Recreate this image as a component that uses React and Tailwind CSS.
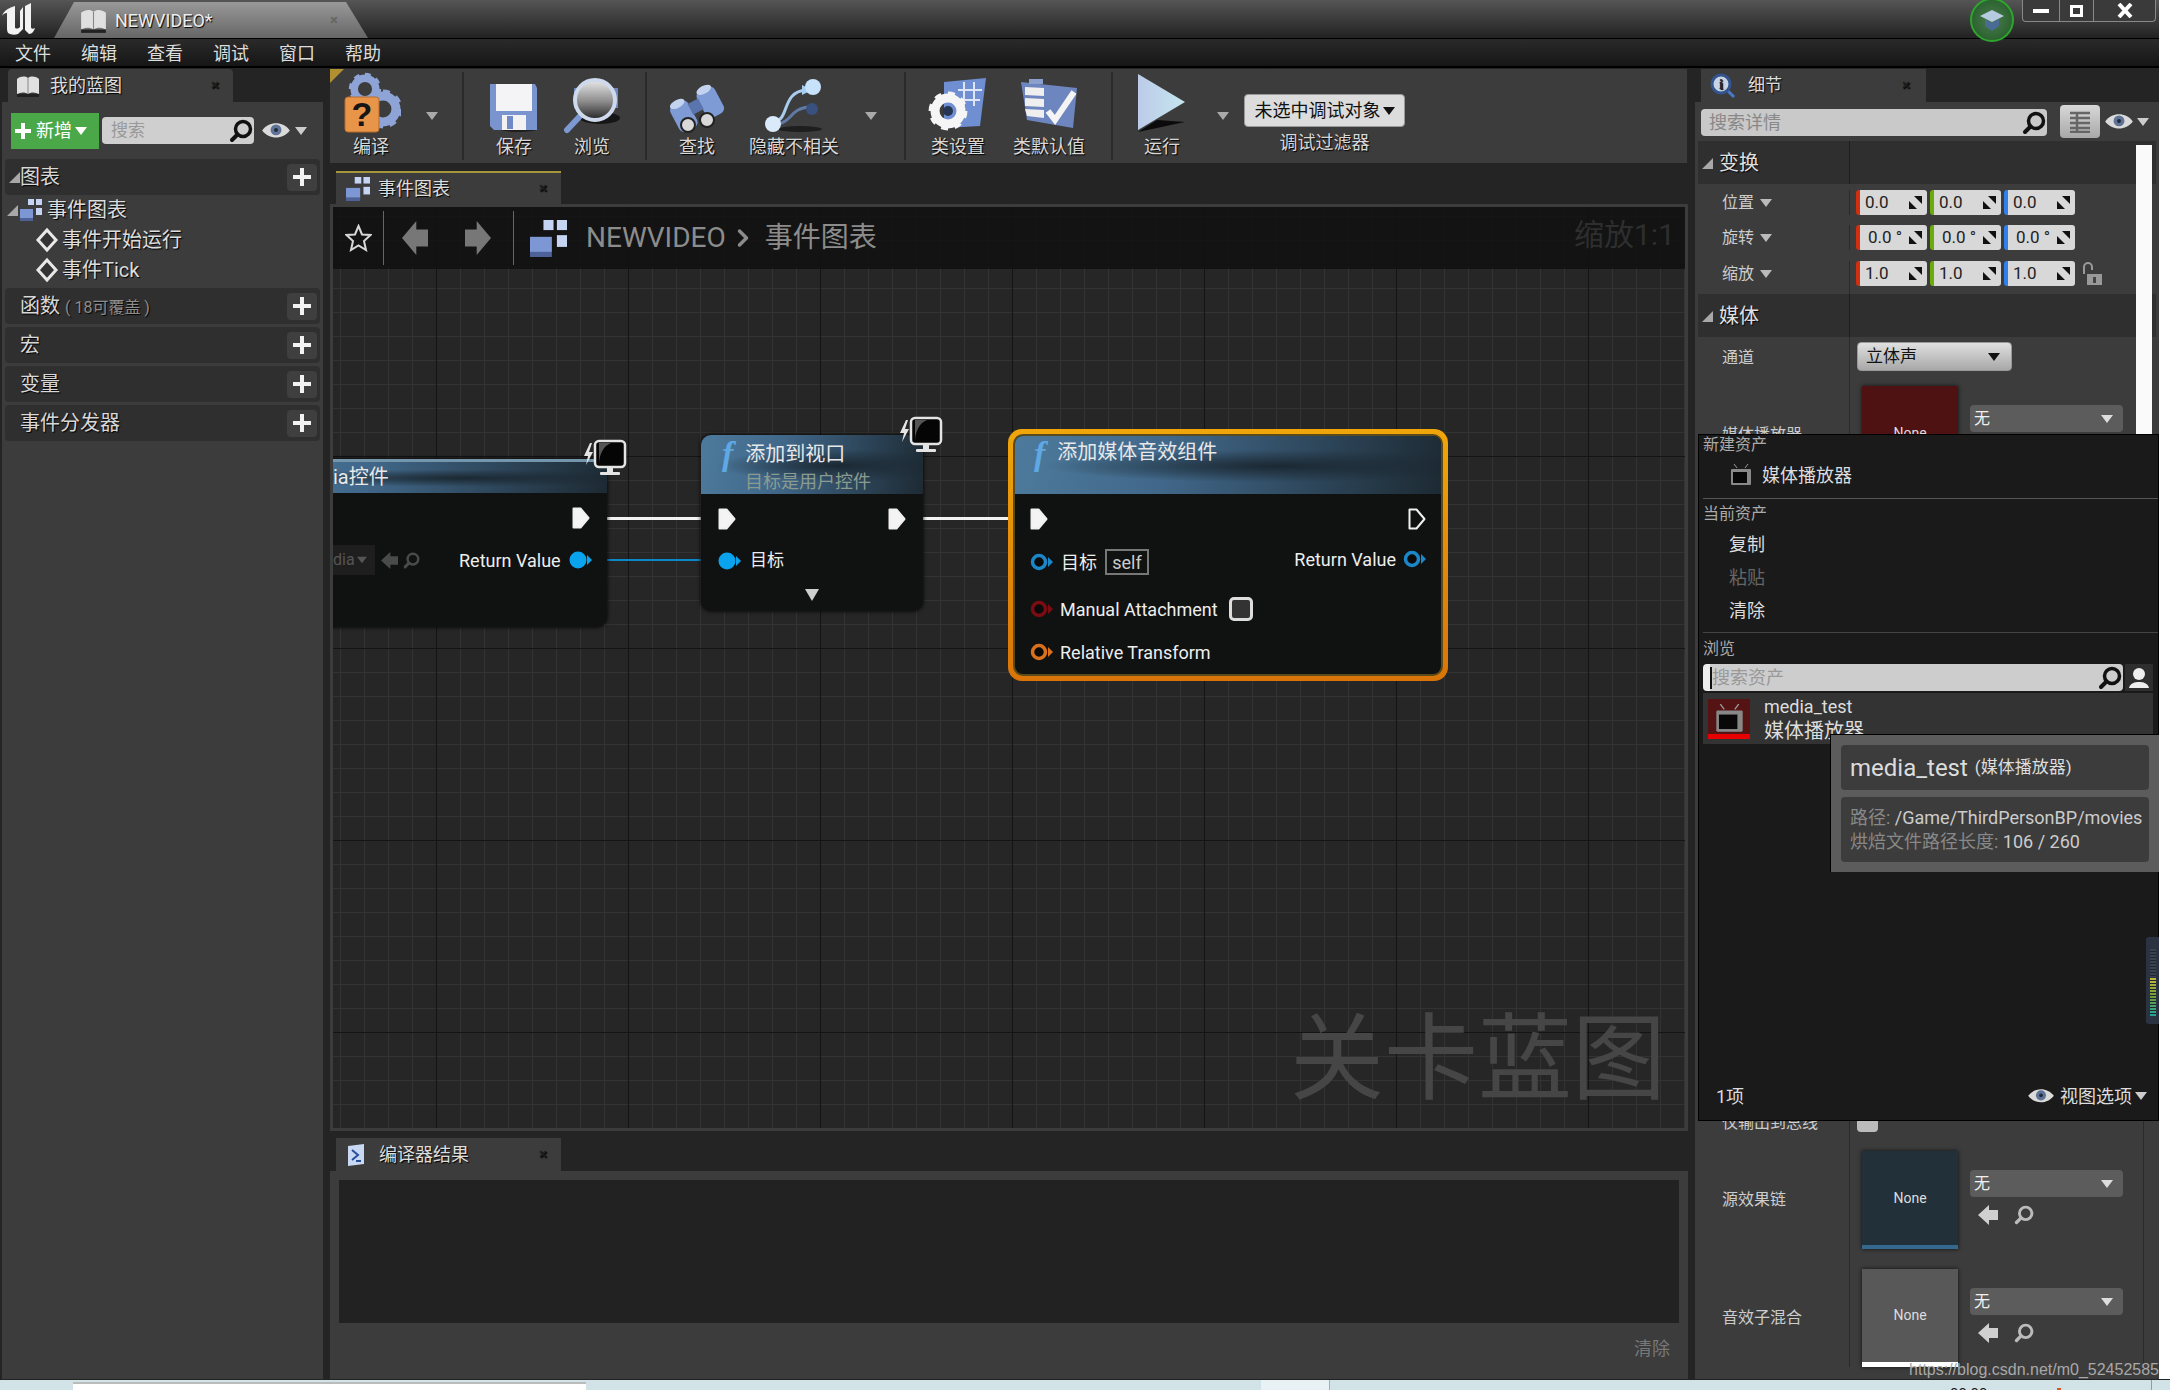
import { ChevronRight } from 'lucide-react';

const shadow = '[text-shadow:1px_1px_1px_#000]';

const Caret = ({ className = '' }) => (
  <svg width="12" height="8" viewBox="0 0 12 8" className={`shrink-0 ${className}`}>
    <polygon points="0,0 12,0 6,8" fill="currentColor" />
  </svg>
);

const Gear = ({ cx, cy, r, fill }) => (
  <g>
    <circle cx={cx} cy={cy} r={r * 0.72} fill="none" stroke={fill} strokeWidth={r * 0.5} />
    <circle cx={cx} cy={cy} r={r * 0.92} fill="none" stroke={fill} strokeWidth={r * 0.32} pathLength="16" strokeDasharray="1 1" />
  </g>
);

const CompileIcon = () => (
  <svg width="60" height="62" viewBox="0 0 60 62">
    <Gear cx="24" cy="17" r="15" fill="#8ea3d6" />
    <Gear cx="42" cy="37" r="18" fill="#8ea3d6" />
    <rect x="4" y="25" width="34" height="35" rx="3" fill="#e8954a" stroke="#b96d28" />
    <text x="21" y="54" textAnchor="middle" fontSize="34" fontWeight="700" fontFamily="Liberation Sans" fill="#161616">?</text>
  </svg>
);

const SaveIcon = () => (
  <svg width="50" height="52" viewBox="0 0 50 52">
    <ellipse cx="30" cy="47" rx="18" ry="3" fill="#111" opacity="0.7" />
    <path d="M1 2h45l2 4v42H5l-4-4z" fill="#7a94cf" />
    <rect x="7" y="2" width="36" height="27" fill="#f4f4f6" />
    <rect x="13" y="33" width="24" height="15" fill="#f2f2f2" />
    <rect x="18" y="34" width="6" height="13" fill="#6f8ac6" />
  </svg>
);

const BrowseIcon = () => (
  <svg width="60" height="58" viewBox="0 0 60 58">
    <defs>
      <linearGradient id="glass" x1="0" y1="0" x2="0" y2="1">
        <stop offset="0" stopColor="#e9e9e9" />
        <stop offset="0.55" stopColor="#8a8a8a" />
        <stop offset="1" stopColor="#222" />
      </linearGradient>
    </defs>
    <ellipse cx="38" cy="42" rx="20" ry="6" fill="#0d0d0d" opacity="0.8" />
    <rect x="12" y="12" width="44" height="20" fill="#6f87bd" />
    <line x1="20" y1="38" x2="5" y2="54" stroke="#7d99d2" strokeWidth="6" strokeLinecap="round" />
    <circle cx="33" cy="24" r="20" fill="url(#glass)" stroke="#cfd9ec" strokeWidth="4" />
  </svg>
);

const FindIcon = () => (
  <svg width="58" height="54" viewBox="0 0 58 54">
    <g transform="rotate(-28 29 27)">
      <rect x="3" y="14" width="20" height="30" rx="6" fill="#7e9bd6" />
      <rect x="33" y="14" width="20" height="30" rx="6" fill="#7e9bd6" />
      <rect x="22" y="20" width="12" height="12" fill="#5a74ad" />
      <ellipse cx="13" cy="15" rx="8" ry="4" fill="#c3d2ef" />
      <ellipse cx="43" cy="15" rx="8" ry="4" fill="#c3d2ef" />
    </g>
    <circle cx="20" cy="45" r="7" fill="#d8d8d8" stroke="#222" strokeWidth="2" />
    <circle cx="39" cy="40" r="7" fill="#d8d8d8" stroke="#222" strokeWidth="2" />
  </svg>
);

const HideIcon = () => (
  <svg width="60" height="56" viewBox="0 0 60 56">
    <ellipse cx="36" cy="51" rx="22" ry="3" fill="#111" opacity="0.7" />
    <path d="M10 44C26 42 17 14 42 12" fill="none" stroke="#a9cdf0" strokeWidth="3" />
    <polygon points="38,7 48,12 38,17" fill="#a9cdf0" />
    <path d="M14 46C28 44 26 30 46 29" fill="none" stroke="#6079a5" strokeWidth="3" />
    <circle cx="49" cy="9" r="8" fill="#c7e2fb" />
    <circle cx="48" cy="31" r="6" fill="#39517f" />
    <circle cx="9" cy="46" r="8" fill="#dbeafb" />
  </svg>
);

const SettingsIcon = () => (
  <svg width="60" height="56" viewBox="0 0 60 56">
    <polygon points="16,4 58,0 52,48 16,50" fill="#6f8fd2" />
    <path d="M30 12h24M28 22h24M36 4v24M46 4v24" stroke="#dde6f7" strokeWidth="2" />
    <Gear cx="20" cy="33" r="18" fill="#f5f5f5" />
    <circle cx="20" cy="33" r="5" fill="#263553" />
  </svg>
);

const DefaultsIcon = () => (
  <svg width="60" height="56" viewBox="0 0 60 56">
    <polygon points="2,4 58,10 54,50 8,42" fill="#6e86bf" />
    <rect x="10" y="1" width="14" height="5" fill="#8ba0cd" />
    <polygon points="6,9 25,10 25,18 6,17" fill="#efefef" />
    <polygon points="6,20 25,21 25,29 6,28" fill="#efefef" />
    <polygon points="6,31 25,32 25,40 8,38" fill="#efefef" />
    <path d="M29 33l7 9L55 14" fill="none" stroke="#f4f4f4" strokeWidth="6" />
  </svg>
);

const PlayIcon = () => (
  <svg width="50" height="60" viewBox="0 0 50 60">
    <defs>
      <linearGradient id="play" x1="0" y1="0" x2="1" y2="0">
        <stop offset="0" stopColor="#bccbe8" />
        <stop offset="1" stopColor="#c5e6ef" />
      </linearGradient>
    </defs>
    <polygon points="1,58 48,48 20,46" fill="#0b0b0b" />
    <polygon points="1,0 48,28 1,56" fill="url(#play)" />
  </svg>
);

const Search = ({ className = '', color = '#111', size = 24 }) => (
  <svg width={size} height={size} viewBox="0 0 24 24" className={`shrink-0 ${className}`}>
    <circle cx="14" cy="10" r="7.5" fill="none" stroke={color} strokeWidth="3.5" />
    <line x1="8.5" y1="15.5" x2="3" y2="21" stroke={color} strokeWidth="4" strokeLinecap="round" />
  </svg>
);

const Eye = ({ w = 28 }) => (
  <svg width={w} height={w * 0.6} viewBox="0 0 28 17" className="shrink-0">
    <path d="M0 8.5C7 -1 21 -1 28 8.5C21 18 7 18 0 8.5z" fill="#dadada" />
    <circle cx="14" cy="8" r="5.5" fill="#5e7396" />
    <circle cx="14" cy="8" r="2" fill="#202a3a" />
  </svg>
);

const BackArrow = ({ color = '#ccc', w = 20, h = 20 }) => (
  <svg width={w} height={h} viewBox="0 0 20 20" preserveAspectRatio="none" className="shrink-0">
    <polygon points="0,10 11,0 11,5 20,5 20,15 11,15 11,20" fill={color} />
  </svg>
);

const GraphGlyph = ({ size = 22 }) => (
  <svg width={size} height={size} viewBox="0 0 22 22" className="shrink-0">
    <rect x="8" y="0" width="6" height="6" fill="#c4d4f2" />
    <rect x="16" y="0" width="6" height="6" fill="#c4d4f2" />
    <rect x="16" y="9" width="6" height="7" fill="#c4d4f2" />
    <rect x="0" y="10" width="13" height="9" fill="#7c97d3" />
    <rect x="0" y="19" width="13" height="3" fill="#4c6299" />
  </svg>
);

const BookIcon = ({ w = 24, h = 24 }) => (
  <svg width={w} height={h} viewBox="0 0 24 24" className="shrink-0">
    <path d="M1 5c4-3 8-3 11-1c3-2 7-2 11 1v15c-4-2-8-2-11 0c-3-2-7-2-11 0z" fill="#e0e0e0" />
    <path d="M12 4v16" stroke="#888" />
    <rect x="1" y="20" width="22" height="3" fill="#222" />
  </svg>
);

const Close = () => <span className="text-[15px] leading-none font-bold text-[#1e1e1e]">×</span>;

const PlusBtn = () => (
  <div className="flex h-[27px] w-[30px] items-center justify-center rounded-sm bg-[#3f3f3f]">
    <svg width="18" height="18" viewBox="0 0 18 18">
      <path d="M7 0h4v7h7v4h-7v7H7v-7H0V7h7z" fill="#f2f2f2" />
    </svg>
  </div>
);

const Corner = () => (
  <svg width="11" height="11" viewBox="0 0 11 11" className="shrink-0">
    <polygon points="11,0 11,11 0,11" fill="#a8a8a8" />
  </svg>
);

const Section = ({ children, arrow, className = 'mb-[3px]' }) => (
  <div className={`mx-[3px] flex h-[36px] items-center rounded-sm bg-[#2f2f2f] pr-[3px] ${className}`}>
    <div className="flex w-[15px] justify-end">{arrow && <Corner />}</div>
    <div className={`flex-1 text-[20px] text-[#d8d8d8] ${shadow}`}>{children}</div>
    <PlusBtn />
  </div>
);

const Diamond = () => (
  <svg width="24" height="26" viewBox="0 0 24 26" className="shrink-0">
    <polygon points="12,3 21,13 12,23 3,13" fill="#333" stroke="#e8e8e8" strokeWidth="3" />
  </svg>
);

const LeftPanel = () => (
  <div className="flex w-[330px] flex-col">
    <div className={`ml-[8px] flex h-[33px] w-[225px] items-center rounded-t-sm bg-[#3c3c3c] pr-[14px] pl-[8px] text-[18px] text-[#ddd] ${shadow}`}>
      <BookIcon />
      <span className="ml-[10px] flex-1">我的蓝图</span>
      <Close />
    </div>
    <div className="ml-[2px] w-[321px] flex-1 bg-[#3c3c3c]">
      <div className="flex h-[57px] items-center pl-[9px]">
        <div className="flex h-[36px] w-[88px] items-center bg-[#4aa848] pl-[4px] text-[18px] text-white">
          <svg width="16" height="16" viewBox="0 0 16 16"><path d="M6 0h4v6h6v4h-6v6H6v-6H0V6h6z" fill="#fff" /></svg>
          <span className="ml-[5px]">新增</span>
          <Caret className="ml-[3px] text-white" />
        </div>
        <div className="ml-[3px] flex h-[27px] w-[152px] items-center rounded-sm bg-[#cfcfcf] pr-[1px] pl-[9px] text-[17px] text-[#999]">
          <span className="flex-1">搜索</span>
          <Search />
        </div>
        <div className="ml-[8px]"><Eye /></div>
        <Caret className="ml-[5px] text-[#ccc]" />
      </div>
      <Section arrow className="mb-0">图表</Section>
      <div className="flex h-[30px] items-center pl-[5px] text-[20px] text-[#ddd]">
        <Corner />
        <span className="ml-[2px]"><GraphGlyph /></span>
        <span className={`ml-[5px] ${shadow}`}>事件图表</span>
      </div>
      <div className={`flex h-[30px] items-center pl-[33px] text-[20px] text-[#ddd] ${shadow}`}>
        <Diamond />
        <span className="ml-[3px]">事件开始运行</span>
      </div>
      <div className={`mb-[3px] flex h-[30px] items-center pl-[33px] text-[20px] text-[#ddd] ${shadow}`}>
        <Diamond />
        <span className="ml-[3px]">事件Tick</span>
      </div>
      <Section>
        函数 <span className="text-[16px] text-[#8c8c8c]">( 18可覆盖 )</span>
      </Section>
      <Section>宏</Section>
      <Section>变量</Section>
      <Section>事件分发器</Section>
    </div>
  </div>
);

const ToolBtn = ({ width, label, children }) => (
  <div className="flex flex-col items-center" style={{ width }}>
    <div className="flex h-[65px] items-end">{children}</div>
    <div className={`mt-[1px] text-[18px] leading-[24px] text-[#d8d8d8] ${shadow}`}>{label}</div>
  </div>
);

const ToolCaret = ({ width }) => (
  <div className="flex justify-center pt-[43px]" style={{ width }}>
    <Caret className="text-[#aaa]" />
  </div>
);

const ToolSep = ({ className = '' }) => <div className={`my-[3px] w-[2px] bg-[#2a2a2a] ${className}`} />;

const Toolbar = () => (
  <div className="relative flex h-[94px] w-[1357px] bg-[#3c3c3c]">
    <div className="absolute top-0 left-0 h-0 w-0 border-t-[14px] border-r-[14px] border-t-[#b09030] border-r-transparent" />
    <ToolBtn width={82} label="编译"><CompileIcon /></ToolBtn>
    <ToolCaret width={40} />
    <ToolSep className="ml-[10px]" />
    <div className="w-[12px]" />
    <ToolBtn width={76} label="保存"><SaveIcon /></ToolBtn>
    <ToolBtn width={80} label="浏览"><BrowseIcon /></ToolBtn>
    <ToolSep className="ml-[13px]" />
    <div className="w-[5px]" />
    <ToolBtn width={90} label="查找"><FindIcon /></ToolBtn>
    <ToolBtn width={104} label="隐藏不相关"><HideIcon /></ToolBtn>
    <ToolCaret width={50} />
    <ToolSep className="ml-[8px]" />
    <div className="w-[7px]" />
    <ToolBtn width={90} label="类设置"><SettingsIcon /></ToolBtn>
    <ToolBtn width={92} label="类默认值"><DefaultsIcon /></ToolBtn>
    <ToolSep className="ml-[16px]" />
    <div className="w-[9px]" />
    <ToolBtn width={80} label="运行"><PlayIcon /></ToolBtn>
    <ToolCaret width={42} />
    <div className="flex w-[161px] flex-col items-center pt-[25px]">
      <div className="flex h-[33px] w-[161px] items-center justify-center rounded-sm border border-[#999] bg-[#dcdcdc] text-[18px] text-[#111]">
        未选中调试对象
        <Caret className="ml-[2px] text-[#111]" />
      </div>
      <div className={`mt-[2px] text-[18px] text-[#d8d8d8] ${shadow}`}>调试过滤器</div>
    </div>
  </div>
);

const Monitor = ({ className }) => (
  <svg width="44" height="38" viewBox="0 0 44 38" className={`absolute ${className}`}>
    <path d="M7 4L1 17h4l-2 9 7-13H6l3-9z" fill="#e4e4e4" />
    <rect x="12" y="2" width="30" height="26" rx="4" fill="#050505" stroke="#e4e4e4" strokeWidth="2.5" />
    <path d="M16 26c0-10 4-19 12-22H16z" fill="#555" />
    <rect x="24" y="28" width="6" height="5" fill="#e4e4e4" />
    <rect x="17" y="33" width="20" height="3" rx="1" fill="#e4e4e4" />
  </svg>
);

const ExecPin = ({ hollow }) => (
  <svg width="18" height="22" viewBox="0 0 18 22" className="shrink-0">
    <path d="M1.5 1.5h7L16.5 11l-8 9.500h-7z" fill={hollow ? 'none' : '#f4f4f4'} stroke="#f0f0f0" strokeWidth="2" strokeLinejoin="round" />
  </svg>
);

const DataPin = ({ color, filled }) => (
  <svg width="23" height="18" viewBox="0 0 23 18" className="shrink-0">
    <polygon points="18,4 23,9 18,14" fill={color} />
    <circle cx="9" cy="9" r={filled ? 8.500 : 6.500} fill={filled ? color : '#0a0a0a'} stroke={color} strokeWidth={filled ? 0 : 3.500} />
  </svg>
);

const FGlyph = () => (
  <span className="[font-family:'Liberation_Serif',serif] text-[34px] leading-none font-bold text-[#5fa8e4] italic">f</span>
);

const headerBg = 'bg-[radial-gradient(ellipse_55%_28%_at_62%_52%,#1b2832,transparent),linear-gradient(100deg,#4d7a9c_0%,#41688a_35%,#1d2a33_100%)]';
const pinText = 'text-[18px] text-[#eee]';

const Node3 = () => (
  <div className="absolute top-[222px] left-[675px] h-[252px] w-[440px] rounded-[14px] bg-[linear-gradient(180deg,#efa60a,#e0860a_60%,#d97508)] p-[5px]">
    <div className="h-full rounded-[10px] border-2 border-[#5a4a1c] bg-[#101211]">
      <div className={`flex h-[58px] items-start rounded-t-[8px] pt-[1px] pl-[19px] ${headerBg}`}>
        <FGlyph />
        <span className="ml-[12px] text-[20px] text-[#e8e8e8]">添加媒体音效组件</span>
      </div>
      <div className="flex flex-col pr-[15px] pl-[15px]">
        <div className="mt-[8px] flex h-[34px] items-center justify-between">
          <ExecPin />
          <ExecPin hollow />
        </div>
        <div className={`mt-[9px] flex h-[34px] items-center ${pinText}`}>
          <DataPin color="#1b86c8" />
          <span className="ml-[8px]">目标</span>
          <span className="ml-[8px] flex h-[26px] w-[44px] items-center justify-center border-2 border-[#777] text-[#ccc]">self</span>
          <span className="ml-auto -translate-y-[3px]">Return Value</span>
          <span className="ml-[7px] -translate-y-[3px]"><DataPin color="#1b86c8" /></span>
        </div>
        <div className={`mt-[13px] flex h-[34px] items-center ${pinText}`}>
          <DataPin color="#7a0c12" />
          <span className="ml-[7px]">Manual Attachment</span>
          <span className="ml-[11px] h-[24px] w-[24px] rounded-[5px] border-[3px] border-[#ddd] bg-[#333]" />
        </div>
        <div className={`mt-[9px] flex h-[34px] items-center ${pinText}`}>
          <DataPin color="#d9711c" />
          <span className="ml-[7px]">Relative Transform</span>
        </div>
      </div>
    </div>
  </div>
);

const Node2 = () => (
  <div className="absolute top-[228px] left-[368px] h-[176px] w-[222px] rounded-[10px] bg-[#101211] shadow-[0_0_4px_#000]">
    <div className={`h-[59px] rounded-t-[10px] pt-[2px] pl-[21px] ${headerBg}`}>
      <div className="flex items-center">
        <FGlyph />
        <span className="ml-[12px] text-[20px] leading-[26px] text-[#e8e8e8]">添加到视口</span>
      </div>
      <div className="ml-[23px] text-[18px] leading-[22px] text-[#8b9c8f]">目标是用户控件</div>
    </div>
    <div className="mt-[5px] flex h-[40px] items-center justify-between pr-[17px] pl-[17px]">
      <ExecPin />
      <ExecPin />
    </div>
    <div className="mt-[2px] flex h-[40px] items-center pl-[17px]">
      <DataPin color="#0aa4ee" filled />
      <span className="ml-[9px] text-[17px] text-[#eee]">目标</span>
    </div>
    <div className="mt-[8px] flex justify-center">
      <svg width="14" height="12" viewBox="0 0 14 12"><polygon points="0,0 14,0 7,12" fill="#cfcfcf" /></svg>
    </div>
    <Monitor className="-top-[19px] right-[-20px]" />
  </div>
);

const Node1 = () => (
  <div className="absolute top-[252px] left-[-100px] h-[168px] w-[374px] rounded-[10px] bg-[#101211] shadow-[0_0_4px_#000]">
    <div className={`flex h-[34px] items-center rounded-t-[10px] border-t-[3px] border-[#7396ad] pb-[2px] pl-[100px] text-[20px] text-[#e8e8e8] ${headerBg}`}>
      ia控件
    </div>
    <div className="mt-[8px] flex h-[34px] items-center justify-end pr-[17px]">
      <ExecPin />
    </div>
    <div className="mt-[8px] flex h-[34px] items-center pl-[100px]">
      <span className="flex h-[30px] w-[42px] items-center bg-[#1e1e1e] text-[16px] text-[#555]">
        dia
        <Caret className="ml-[2px] !w-[10px] text-[#555]" />
      </span>
      <span className="ml-[6px]"><BackArrow color="#4a4a4a" w={17} h={17} /></span>
      <span className="ml-[5px]"><Search color="#4a4a4a" size={17} /></span>
      <span className="ml-[39px] text-[18px] whitespace-nowrap text-[#eee]">Return Value</span>
      <span className="ml-[8px]"><DataPin color="#0aa4ee" filled /></span>
    </div>
    <Monitor className="-top-[20px] right-[-20px]" />
  </div>
);

const Graph = () => (
  <div className="border-[3px] border-[#3c3c3c]">
    <div className="relative h-[921px] overflow-hidden bg-[#262626] bg-[linear-gradient(#141414_1px,transparent_1px),linear-gradient(90deg,#141414_1px,transparent_1px),linear-gradient(#333_1px,transparent_1px),linear-gradient(90deg,#333_1px,transparent_1px)] bg-[size:192px_192px,192px_192px,24px_24px,24px_24px] bg-[position:0_57px,103px_0,0_9px,7px_0]">
      <div className="absolute top-[310px] left-[274px] h-[3px] w-[110px] bg-[#f2f2f2]" />
      <div className="absolute top-[310px] left-[570px] h-[3px] w-[110px] bg-[#f2f2f2]" />
      <div className="absolute top-[352px] left-[274px] h-[2px] w-[110px] bg-[#0a88c8]" />
      <Node1 />
      <Node2 />
      <Node3 />

      <div className="absolute top-0 right-0 left-0 flex h-[62px] items-center bg-[#111]/85 pl-[12px]">
        <svg width="27" height="28" viewBox="0 0 27 28" className="shrink-0">
          <polygon points="13.5,2 17,10.500 25.500,11 19,17 21,26 13.500,21.500 6,26 8,17 1.500,11 10,10.500" fill="none" stroke="#d8d8d8" strokeWidth="2" />
        </svg>
        <div className="ml-[11px] h-[54px] w-[1px] bg-[#666]" />
        <span className="ml-[18px]"><BackArrow color="#777" w={26} h={34} /></span>
        <span className="ml-[37px] -scale-x-100"><BackArrow color="#777" w={26} h={34} /></span>
        <div className="ml-[22px] h-[54px] w-[1px] bg-[#666]" />
        <span className="ml-[16px]"><GraphGlyph size={37} /></span>
        <span className="ml-[19px] text-[28px] text-[#8c8c8c]">NEWVIDEO</span>
        <ChevronRight size={28} strokeWidth={3} className="ml-[3px] text-[#8c8c8c]" />
        <span className="ml-[8px] text-[28px] text-[#8c8c8c]">事件图表</span>
        <span className="mr-[10px] ml-auto pb-[8px] text-[30px] text-[#2e2e2e]">缩放1:1</span>
      </div>
      <div className="absolute top-[795px] left-[957px] text-[94px] leading-[116px] font-normal whitespace-nowrap text-[#464646]">关卡蓝图</div>
    </div>
  </div>
);

const Tab = ({ icon, label, yellow, gap }) => (
  <div className={`ml-[6px] flex h-[33px] w-[225px] items-center bg-[#3c3c3c] pr-[14px] pl-[10px] text-[18px] text-[#ddd] ${shadow} ${yellow ? 'border-t-2 border-[#a8963c]' : ''}`}>
    {icon}
    <span className={`flex-1 ${gap}`}>{label}</span>
    <Close />
  </div>
);

const CenterPanel = () => (
  <div className="flex w-[1358px] flex-col">
    <Toolbar />
    <div className="mt-[8px]">
      <Tab yellow gap="ml-[8px]" icon={<GraphGlyph size={24} />} label="事件图表" />
    </div>
    <Graph />
    <div className="mt-[7px]">
      <Tab
        gap="ml-[13px]"
        label="编译器结果"
        icon={
          <svg width="20" height="22" viewBox="0 0 20 22" className="shrink-0">
            <polygon points="2,2 18,0 18,20 2,22" fill="#c9d9f3" />
            <path d="M6 6l6 5-6 5M10 17h5" fill="none" stroke="#274d9b" strokeWidth="2" />
          </svg>
        }
      />
    </div>
    <div className="flex-1 bg-[#3c3c3c] px-[9px] pt-[9px]">
      <div className="h-[143px] bg-[#222]" />
      <div className="mt-[12px] pr-[9px] text-right text-[18px] text-[#777]">清除</div>
    </div>
  </div>
);

const NumBox = ({ value, color, deg }) => (
  <div className={`flex h-[25px] w-[71px] items-center rounded-[3px] border-l-4 bg-[#d8d8d8] pr-[5px] text-[17px] text-[#222] ${color} ${deg ? 'pl-[8px]' : 'pl-[5px]'}`}>
    <span className="flex-1 whitespace-nowrap">{value}</span>
    <svg width="13" height="13" viewBox="0 0 13 13" className="shrink-0">
      <polygon points="5,0 13,0 13,8" fill="#111" />
      <polygon points="0,5 0,13 8,13" fill="#111" />
    </svg>
  </div>
);

const TransformRow = ({ label, value, deg, lock, className = '' }) => (
  <div className={`flex h-[25px] ${className}`}>
    <div className="flex w-[155px] items-center border-r border-[#2a2a2a] pl-[27px] text-[16px] text-[#ccc]">
      {label}
      <Caret className="ml-[6px] text-[#bbb]" />
    </div>
    <div className="flex items-center gap-[3px] pl-[6px]">
      <NumBox value={value} color="border-[#d0300f]" deg={deg} />
      <NumBox value={value} color="border-[#6cab0c]" deg={deg} />
      <NumBox value={value} color="border-[#2f80ea]" deg={deg} />
      {lock && (
        <svg width="22" height="24" viewBox="0 0 22 24" className="ml-[3px] shrink-0">
          <path d="M3 12V5a4 4 0 0 1 8 0v3" fill="none" stroke="#999" strokeWidth="2" />
          <rect x="6" y="12" width="15" height="11" fill="#999" />
          <rect x="12" y="15" width="3" height="6" fill="#444" />
        </svg>
      )}
    </div>
  </div>
);

const DetailSection = ({ label }) => (
  <div className="mx-[3px] flex h-[43px] items-center bg-[#2f2f2f]">
    <div className={`flex w-[152px] items-center self-stretch border-r border-[#1e1e1e] pt-[1px] pl-[4px] text-[20px] text-[#e0e0e0] ${shadow}`}>
      <Corner />
      <span className="ml-[6px]">{label}</span>
    </div>
  </div>
);

const AssetRow = ({ label, thumb, strip, text = 'None', className = '', stripH }) => (
  <div className={`flex h-[98px] ${className}`}>
    <div className="flex w-[155px] items-center border-r border-[#2a2a2a] pl-[27px] text-[16px] text-[#ccc]">{label}</div>
    <div className={`ml-[12px] flex h-[98px] w-[96px] flex-col shadow-[0_0_4px_#111] ${thumb}`}>
      <div className="flex flex-1 items-center justify-center text-[14px] text-[#ddd]">{text}</div>
      <div className={`${stripH} ${strip}`} />
    </div>
    <div className="ml-[12px] pt-[19px]">
      <div className="flex h-[27px] w-[153px] items-center justify-between rounded-[4px] bg-[#5c5c5c] pr-[10px] pl-[4px] text-[16px] text-[#f0f0f0]">
        无
        <Caret className="text-[#ddd]" />
      </div>
      <div className="mt-[8px] flex items-center pl-[8px]">
        <BackArrow color="#d0d0d0" />
        <span className="ml-[16px]"><Search color="#bbb" size={20} /></span>
      </div>
    </div>
  </div>
);

const TvIcon = ({ size = 22 }) => (
  <svg width={size} height={size} viewBox="0 0 22 22" className="shrink-0">
    <path d="M7 4L4 0M15 4l3-4" stroke="#999" />
    <rect x="1" y="5" width="20" height="16" rx="1" fill="#888" />
    <rect x="3" y="8" width="14" height="11" fill="#080808" />
  </svg>
);

const PopupMenu = () => (
  <div className="absolute top-[365px] left-[10px] flex h-[687px] w-[461px] flex-col border border-[#000] bg-[#1a1a1a] pl-[4px] text-[#ddd]">
    <div className="flex h-[20px] items-center text-[16px] text-[#aaa]">新建资产</div>
    <div className="flex h-[40px] items-center pl-[27px] text-[18px]">
      <TvIcon />
      <span className="ml-[10px]">媒体播放器</span>
    </div>
    <div className="mt-[3px] h-[1px] bg-[#555]" />
    <div className="flex h-[29px] items-center text-[16px] text-[#aaa]">当前资产</div>
    <div className="flex h-[33px] items-center pl-[26px] text-[18px]">复制</div>
    <div className="flex h-[33px] items-center pl-[26px] text-[18px] text-[#666]">粘贴</div>
    <div className="flex h-[33px] items-center pl-[26px] text-[18px]">清除</div>
    <div className="mt-[5px] h-[1px] bg-[#444]" />
    <div className="flex h-[31px] items-center text-[16px] text-[#aaa]">浏览</div>
    <div className="flex h-[27px] items-center">
      <div className="flex h-full w-[420px] items-center rounded-sm border-l-[7px] border-[#eee] bg-[#cdcdcd] pr-[1px] text-[18px] text-[#999]">
        <span className="h-[22px] w-[2px] bg-[#111]" />
        <span className="flex-1">搜索资产</span>
        <Search />
      </div>
      <div className="ml-[2px] flex h-full w-[28px] items-center justify-center bg-[#2e2e2e]">
        <svg width="22" height="22" viewBox="0 0 22 22">
          <circle cx="11" cy="7" r="6" fill="#eee" />
          <path d="M1 21c1-5 6-6 10-6s9 1 10 6z" fill="#eee" />
        </svg>
      </div>
    </div>
    <div className="mt-[2px] flex h-[51px] w-[450px] items-center bg-[#333] pl-[5px]">
      <div className="flex h-[40px] w-[42px] flex-col items-center justify-end bg-[#551313]">
        <TvIcon size={29} />
        <div className="mt-[1px] h-[5px] w-full bg-[#e80000]" />
      </div>
      <div className="ml-[14px] flex flex-col">
        <span className="text-[18px] leading-[24px]">media_test</span>
        <span className="text-[20px] leading-[24px]">媒体播放器</span>
      </div>
    </div>
    <div className="absolute top-[299px] left-[131px] flex h-[138px] w-[329px] flex-col gap-[7px] border-t border-l border-[#000] bg-[#5c5c5c] p-[10px]">
      <div className="flex h-[45px] items-center rounded-sm bg-[#3c3c3c] pl-[9px] text-[24px] text-[#ddd]">
        media_test
        <span className="ml-[7px] text-[17px]">(媒体播放器)</span>
      </div>
      <div className="flex flex-1 flex-col justify-center rounded-sm bg-[#3c3c3c] pl-[9px] text-[18px] leading-[24px] whitespace-nowrap text-[#ccc]">
        <div><span className="text-[#888]">路径: </span>/Game/ThirdPersonBP/movies</div>
        <div><span className="text-[#888]">烘焙文件路径长度: </span>106 / 260</div>
      </div>
    </div>
    <div className="mt-auto flex h-[50px] items-center pt-[2px] pr-[11px] pl-[13px] text-[18px]">
      <span className="flex-1">1项</span>
      <Eye w={26} />
      <span className="ml-[6px]">视图选项</span>
      <Caret className="ml-[3px] text-[#ccc]" />
    </div>
    <div className="absolute top-[502px] right-[-1px] flex h-[87px] w-[13px] flex-col items-center justify-end rounded-l-[3px] bg-[#2b3342] pb-[8px]">
      <div className="h-[28px] w-[6px] bg-[repeating-linear-gradient(180deg,#3a4252_0_2px,#20262f_2px_3px)]" />
      <div className="mt-[1px] h-[38px] w-[6px] bg-[repeating-linear-gradient(180deg,transparent_0_2px,#20262f_2px_3px),linear-gradient(180deg,#c5b83a,#6d9b3a_50%,#1fa59a)]" />
    </div>
  </div>
);

const RightPanel = () => (
  <div className="relative flex w-[471px] flex-col pl-[7px]">
    <div className={`ml-[6px] flex h-[33px] w-[225px] items-center bg-[#3c3c3c] pr-[16px] pl-[9px] text-[17px] text-[#ddd] ${shadow}`}>
      <svg width="26" height="26" viewBox="0 0 26 26" className="shrink-0">
        <line x1="17" y1="17" x2="24" y2="24" stroke="#4a78c8" strokeWidth="3" />
        <circle cx="11" cy="11" r="9" fill="#c8d3e6" stroke="#33548f" strokeWidth="3" />
        <text x="11" y="16" textAnchor="middle" fontSize="14" fontWeight="700" fontFamily="Liberation Serif" fill="#223">i</text>
      </svg>
      <span className="ml-[12px] flex-1">细节</span>
      <Close />
    </div>
    <div className="flex-1 bg-[#3c3c3c]">
      <div className="flex h-[39px] items-center pl-[6px]">
        <div className="flex h-[27px] w-[346px] translate-y-[1px] items-center rounded-sm bg-[#c9c9c9] pr-[1px] pl-[8px] text-[18px] text-[#888]">
          <span className="flex-1">搜索详情</span>
          <Search />
        </div>
        <div className="ml-[13px] flex h-[33px] w-[40px] items-center justify-center rounded-sm bg-[linear-gradient(180deg,#d8d8d8,#a8a8a8)]">
          <svg width="22" height="22" viewBox="0 0 22 22">
            <path d="M1 2h20M1 7h20M1 12h20M1 17h20M1 21h20M8 2v20" stroke="#666" strokeWidth="2.500" />
          </svg>
        </div>
        <div className="ml-[5px]"><Eye /></div>
        <Caret className="ml-[4px] text-[#ccc]" />
      </div>
      <DetailSection label="变换" />
      <TransformRow className="mt-[6px]" label="位置" value="0.0" />
      <TransformRow className="mt-[10px]" label="旋转" value="0.0 °" deg />
      <TransformRow className="mt-[11px]" label="缩放" value="1.0" lock />
      <div className="flex h-[8px]"><div className="w-[155px] border-r border-[#2a2a2a]" /></div>
      <DetailSection label="媒体" />
      <div className="flex h-[49px]">
        <div className="flex w-[155px] items-center border-r border-[#2a2a2a] pb-[8px] pl-[27px] text-[16px] text-[#ccc]">通道</div>
        <div className="ml-[7px] flex h-[29px] w-[155px] translate-y-[5px] items-center justify-between rounded-sm border border-[#999] bg-[linear-gradient(180deg,#e0e0e0,#a8a8a8)] pr-[11px] pl-[8px] text-[17px] text-[#111]">
          立体声
          <Caret className="text-[#111]" />
        </div>
      </div>
      <AssetRow label="媒体播放器" thumb="bg-[#4f1212]" strip="bg-[#8a1a1a]" stripH="h-[4px]" />
      <div className="flex h-[627px]"><div className="w-[155px] border-r border-[#2a2a2a]" /></div>
      <div className="flex h-[40px]">
        <div className="flex w-[155px] items-start border-r border-[#2a2a2a] pl-[27px] text-[16px] text-[#ccc]">仅输出到总线</div>
        <div className="ml-[7px] h-[21px] w-[21px] rounded-sm bg-[#bbb]" />
      </div>
      <AssetRow label="源效果链" thumb="bg-[#22303a]" strip="bg-[#35688f]" stripH="h-[4px]" />
      <div className="flex h-[20px]"><div className="w-[155px] border-r border-[#2a2a2a]" /></div>
      <AssetRow label="音效子混合" thumb="bg-[#585858]" strip="bg-white" stripH="h-[5px]" />
    </div>
    <div className="absolute top-[76px] right-[7px] h-[300px] w-[16px] bg-[#fafafa]" />
    <div className="absolute top-[1052px] right-[15px] h-[248px] w-[1px] bg-[#2a2a2a]" />
    <PopupMenu />
    <div className="absolute right-0 bottom-[-1px] text-[16px] leading-[20px] whitespace-nowrap text-[#a8a8a8] [font-family:'Liberation_Sans',sans-serif]">
      https://blog.csdn.net/m0_52452585
    </div>
  </div>
);

const TitleBar = () => (
  <div className="relative flex h-[38px] bg-[linear-gradient(180deg,#555,#222)]">
    <svg width="36" height="34" viewBox="0 0 36 34" className="mt-[2px] ml-[1px] shrink-0">
      <path d="M1 14C3 8 8 6 14 4V25c0 2 3 2 5 0V9l3-4v22l-5 5c-3 1-5 1-8 0-3-1-3-4-3-7V11C4 11 2 12 1 14z" fill="#f2f2f2" />
      <path d="M24 4l6-3v24c0 2 2 2 4 1-1 3-3 6-6 6l-4-4z" fill="#f2f2f2" />
    </svg>
    <div className="mt-[2px] ml-[17px] flex h-[36px] w-[314px] items-center bg-[linear-gradient(180deg,#999,#666)] pr-[30px] pl-[26px] text-[18px] text-[#eee] [clip-path:polygon(20px_0,292px_0,314px_100%,0_100%)]">
      <BookIcon w={27} h={27} />
      <span className={`ml-[8px] flex-1 ${shadow}`}>NEWVIDEO*</span>
      <span className="text-[15px] font-bold text-[#666]">×</span>
    </div>
    <div className="absolute top-[-2px] left-[1970px] flex h-[44px] w-[44px] items-center justify-center rounded-full border-2 border-[#2fa52f] bg-[radial-gradient(circle,#4d7a50,#1d5a22)]">
      <svg width="26" height="26" viewBox="0 0 26 26">
        <polygon points="13,3 25,9 13,15 1,9" fill="#b7cbe0" />
        <path d="M6 12v7l7 5 7-5v-7l-7 4z" fill="#4a6b96" />
      </svg>
    </div>
    <div className="absolute top-0 left-[2022px] flex h-[22px]">
      <div className="flex w-[38px] items-center justify-center rounded-bl-sm border border-t-0 border-[#888] bg-[#3a3a3a]">
        <div className="h-[4px] w-[16px] bg-white" />
      </div>
      <div className="flex w-[34px] items-center justify-center border-r border-b border-[#888] bg-[#3a3a3a]">
        <div className="h-[12px] w-[13px] border-[3px] border-white" />
      </div>
      <div className="flex w-[62px] items-center justify-center rounded-br-sm border-r border-b border-[#888] bg-[#3a3a3a]">
        <svg width="16" height="15" viewBox="0 0 16 15">
          <path d="M2 1l12 13M14 1L2 14" stroke="#fff" strokeWidth="4" />
        </svg>
      </div>
    </div>
  </div>
);

const MENU = ['文件', '编辑', '查看', '调试', '窗口', '帮助'];

const MenuBar = () => (
  <div className="flex h-[28px] border-t border-black bg-[linear-gradient(180deg,#2a2a2a,#161616)] pt-[1px] text-[18px] text-[#ddd]">
    {MENU.map((item) => (
      <div key={item} className="flex w-[66px] items-center justify-center">{item}</div>
    ))}
  </div>
);

const App = () => (
  <div className="flex h-[1390px] w-[2170px] flex-col overflow-hidden bg-white [font-family:Roboto,'Noto_Sans_CJK_SC',sans-serif]">
    <div className="flex h-[1379px]">
      <div className="flex w-[2159px] flex-col bg-[#242424]">
        <TitleBar />
        <MenuBar />
        <div className="h-[3px] border-t-2 border-black" />
        <div className="flex min-h-0 flex-1">
          <LeftPanel />
          <CenterPanel />
          <RightPanel />
        </div>
      </div>
    </div>
    <div className="flex h-[11px] overflow-hidden border-t border-[#222] bg-[#d2e3e8]">
      <div className="mt-[2px] ml-[73px] h-[9px] w-[513px] border-t-2 border-[#bbb] bg-white" />
      <div className="ml-[675px] h-full w-[69px] border-r border-[#aaa] bg-[#e8f1f3]" />
      <div className="ml-[620px] pt-[7px] text-[15px] leading-[15px] text-[#111]">00:00</div>
      <div className="mt-[8px] ml-[70px] h-[3px] w-[4px] bg-[#d9582a]" />
      <div className="ml-[90px] h-full w-[1px] bg-[#999]" />
    </div>
  </div>
);

export default App;
